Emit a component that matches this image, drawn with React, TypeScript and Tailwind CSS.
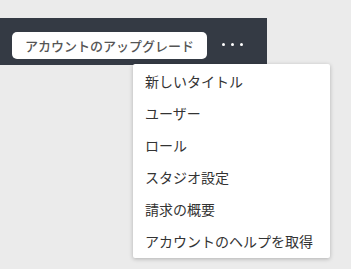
import React from "react";

const items = [
  "新しいタイトル",
  "ユーザー",
  "ロール",
  "スタジオ設定",
  "請求の概要",
  "アカウントのヘルプを取得",
];

export default function App() {
  return (
    <div
      className="relative w-[351px] h-[269px] bg-[#ebebeb] overflow-hidden"
      style={{ fontFamily: '"Noto Sans CJK JP", "Noto Sans", sans-serif' }}
    >
      <div className="mt-[18px] w-[267px] h-[47px] bg-[#343a44] flex items-start pt-[14px] pl-[12px]">
        <button className="h-[27px] w-[195px] bg-white rounded-[5px] text-[13px] font-medium text-[#555] flex items-center justify-center">
          アカウントのアップグレード
        </button>
        <div className="ml-[15px] h-[24px] flex items-center gap-[6px]">
          <span className="w-[3px] h-[3px] rounded-full bg-white" />
          <span className="w-[3px] h-[3px] rounded-full bg-white" />
          <span className="w-[3px] h-[3px] rounded-full bg-white" />
        </div>
      </div>
      <div className="absolute left-[133px] top-[64px] w-[197px] bg-white rounded-[2px] shadow-[0_1px_4px_rgba(0,0,0,0.25)] py-[1px]">
        {items.map((t) => (
          <div key={t} className="h-[32px] flex items-center pl-[12px] text-[14px] text-[#333]">
            {t}
          </div>
        ))}
      </div>
    </div>
  );
}
